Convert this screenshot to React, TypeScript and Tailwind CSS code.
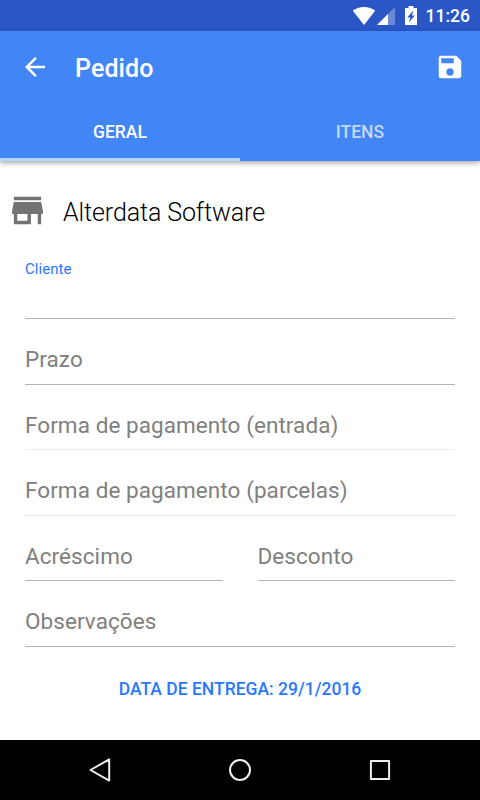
import React from 'react'
import { MdArrowBack, MdSave, MdStore } from 'react-icons/md'

const tabs = [
  { id: 'geral', label: 'GERAL', active: true },
  { id: 'itens', label: 'ITENS', active: false },
];

type FieldProps = {
  label: string
  disabled?: boolean
  className?: string
}

const Field = ({ label, disabled, className = '' }: FieldProps) => (
  <div
    className={`flex h-[65.6px] items-end border-b pb-[10.6px] text-[22.5px] leading-[28px] tracking-[0.07px] text-[#808080] ${
      disabled ? 'border-[#ececec]' : 'border-[#b5b5b5]'
    } ${className}`}
  >
    {label}
  </div>
);

const StatusBar = () => (
  <div className="flex h-[31px] shrink-0 items-center justify-end bg-[#2a56c6] pr-[10px] text-white">
    <svg width="24" height="18" viewBox="0 0 24 18" className="mr-px" fill="currentColor">
      <path d="M12 18 .8 3.800C3.600 1.300 7.600 0 12 0s8.400 1.300 11.200 3.800z" />
    </svg>
    <svg width="18" height="18" viewBox="0 0 18 18" className="mr-[10px]" fill="currentColor">
      <path d="M18 0v18H0z" opacity=".3" />
      <path d="M11 7v11H0z" />
    </svg>
    <svg width="12" height="19" viewBox="0 0 12 19" className="mr-[9px]">
      <path d="M3.500 0h5v2H12v17H0V2h3.500z" fill="white" />
      <path d="M8.400 4.500 2.200 11.400h3.200L3.800 16.500l6-6.900H6.900z" fill="#2a56c6" />
    </svg>
    <span className="pt-[2px] text-[17.5px] leading-[31px] font-medium">11:26</span>
  </div>
);

const NavigationBar = () => (
  <div className="flex h-[60px] shrink-0 items-center justify-center gap-[110px] bg-black">
    <svg width="30" height="30" viewBox="0 0 30 30" fill="none" stroke="#eeeeee" strokeWidth="2" strokeLinejoin="round">
      <path d="M24.200 4.400v21.200L5.500 15z" />
    </svg>
    <svg width="30" height="30" viewBox="0 0 30 30" fill="none" stroke="#eeeeee" strokeWidth="2">
      <circle cx="15" cy="15" r="10" />
    </svg>
    <svg width="30" height="30" viewBox="0 0 30 30" fill="none" stroke="#eeeeee" strokeWidth="2" strokeLinejoin="round">
      <rect x="5.900" y="5.900" width="18.200" height="18.200" />
    </svg>
  </div>
);

export default function App() {
  return (
    <div className="flex h-[800px] w-[480px] flex-col overflow-hidden bg-white font-[Roboto,sans-serif]">
      <StatusBar />

      {/* Toolbar and tabs */}
      <header className="h-[130px] shrink-0 bg-[#4285f4] text-white shadow-[0_2px_5px_rgba(0,0,0,0.35)]">
        <div className="flex h-[71px] items-center pr-[15px] pl-[20px]">
          <MdArrowBack className="size-[30px]" />
          <h1 className="ml-[25px] flex-1 pt-[4px] text-[25px] leading-[30px] font-medium tracking-[0.1px]">Pedido</h1>
          <MdSave className="size-[30px]" />
        </div>
        <div className="grid h-[59px] grid-cols-2">
          {tabs.map((tab) => (
            <div
              key={tab.id}
              className={`flex items-center justify-center border-b-[3px] pt-[5px] text-[17.5px] font-medium ${
                tab.active ? 'border-[#b3d9ff] text-white' : 'border-transparent text-white/70'
              }`}
            >
              {tab.label}
            </div>
          ))}
        </div>
      </header>

      {/* Form */}
      <main className="flex-1">
        <div className="flex items-center pt-[29px] pl-[7px]">
          <MdStore className="size-[41px] text-[#737373]" />
          <h2 className="ml-[15px] pt-[4px] text-[25px] leading-[32px] font-light tracking-[-0.1px] text-black">Alterdata Software</h2>
        </div>
        <div className="px-[25px] pt-[28px]">
          <div className="h-[60px] border-b border-[#b5b5b5] pt-px text-[15px] leading-[18px] tracking-[0.05px] text-[#2979ff]">Cliente</div>
          <Field label="Prazo" />
          <Field label="Forma de pagamento (entrada)" disabled />
          <Field label="Forma de pagamento (parcelas)" disabled />
          <div className="grid grid-cols-2 gap-[35px]">
            <Field label="Acréscimo" />
            <Field label="Desconto" />
          </div>
          <Field label="Observações" />
        </div>
        <button className="mt-[30px] block w-full text-center text-[17.5px] leading-[24px] font-medium text-[#2979ff]">
          DATA DE ENTREGA: 29/1/2016
        </button>
      </main>

      <NavigationBar />
    </div>
  )
}
